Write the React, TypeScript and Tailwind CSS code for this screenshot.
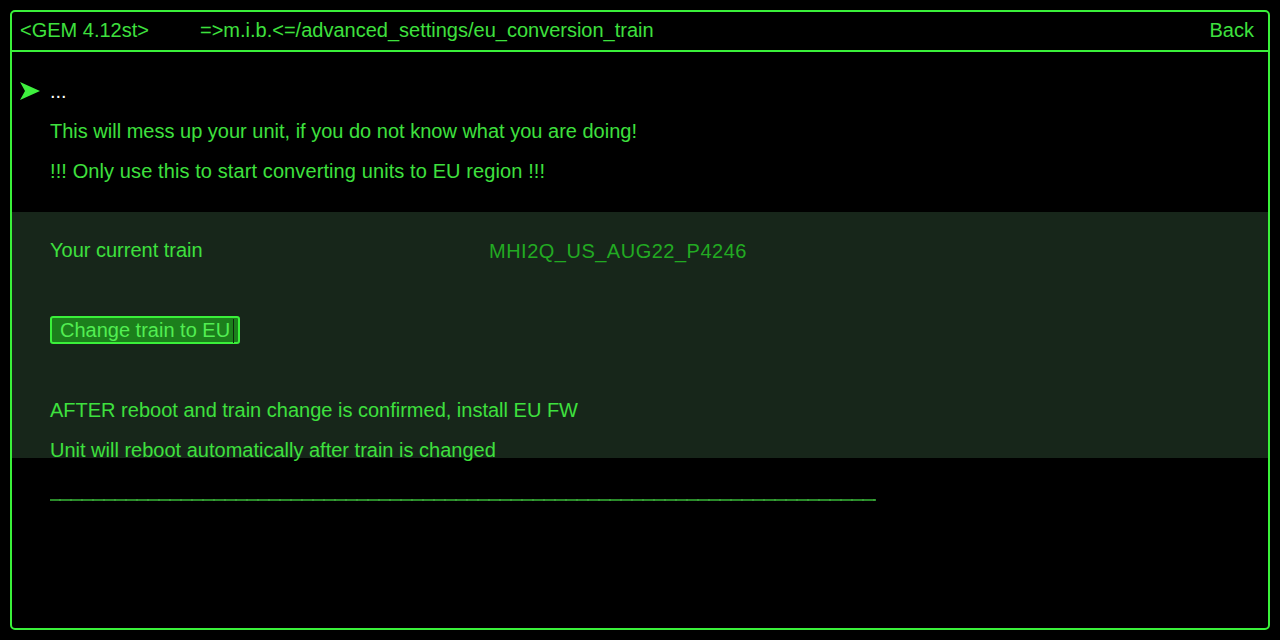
const font = { fontFamily: '"Liberation Sans", Arial, sans-serif' };

function Pointer() {
  return (
    <svg width="20" height="18" viewBox="0 0 20 18" className="shrink-0">
      <path d="M0 0 L20 9 L0 18 L5 9 Z" fill="#3ef03e" />
    </svg>
  );
}

function Row({ children, className = "" }: { children?: React.ReactNode; className?: string }) {
  return <div className={`flex h-[40px] items-center ${className}`}>{children}</div>;
}

export default function App() {
  return (
    <div className="h-[640px] w-[1280px] bg-black p-[10px] text-[20px] text-[#3ee03e]" style={font}>
      <div className="flex h-[620px] flex-col rounded-[5px] border-2 border-[#3af03a]">
        <header className="flex h-[40px] shrink-0 items-center border-b-2 border-[#3af03a] pb-[2px] pl-[8px] pr-[14px]">
          <span className="w-[180px]">&lt;GEM 4.12st&gt;</span>
          <span>=&gt;m.i.b.&lt;=/advanced_settings/eu_conversion_train</span>
          <span className="ml-auto">Back</span>
        </header>

        <div className="pt-[19px]">
          <Row className="pl-[8px]">
            <Pointer />
            <span className="ml-[10px] text-white">...</span>
          </Row>
          <Row className="pl-[38px]">This will mess up your unit, if you do not know what you are doing!</Row>
          <Row className="pl-[38px] tracking-[0.1px]">!!! Only use this to start converting units to EU region !!!</Row>
        </div>

        <section className="mt-[21px] h-[246px] bg-[#17261a] pt-[18px] pl-[38px]">
          <Row>
            <span className="w-[439px]">Your current train</span>
            <span className="pt-[2px] tracking-[0.5px] text-[#22aa22]">MHI2Q_US_AUG22_P4246</span>
          </Row>
          <Row />
          <Row>
            <button className="relative flex h-[28px] items-center rounded-[3px] border-2 border-[#3af03a] bg-[#1c7f1c] pl-[8px] pr-[8px] text-[20px] leading-none text-[#52ee52]">
              Change train to EU
              <span className="absolute right-[4px] top-[1px] h-[24px] w-px bg-[#0c2a0c]" />
            </button>
          </Row>
          <Row />
          <Row>AFTER reboot and train change is confirmed, install EU FW</Row>
          <Row>Unit will reboot automatically after train is changed</Row>
        </section>

        <div className="ml-[38px] mt-[41px] h-[2px] w-[826px] bg-[repeating-linear-gradient(90deg,#2a8a2a_0px,#2a8a2a_9px,#389e38_9px,#389e38_11px)]" />
      </div>
    </div>
  );
}
